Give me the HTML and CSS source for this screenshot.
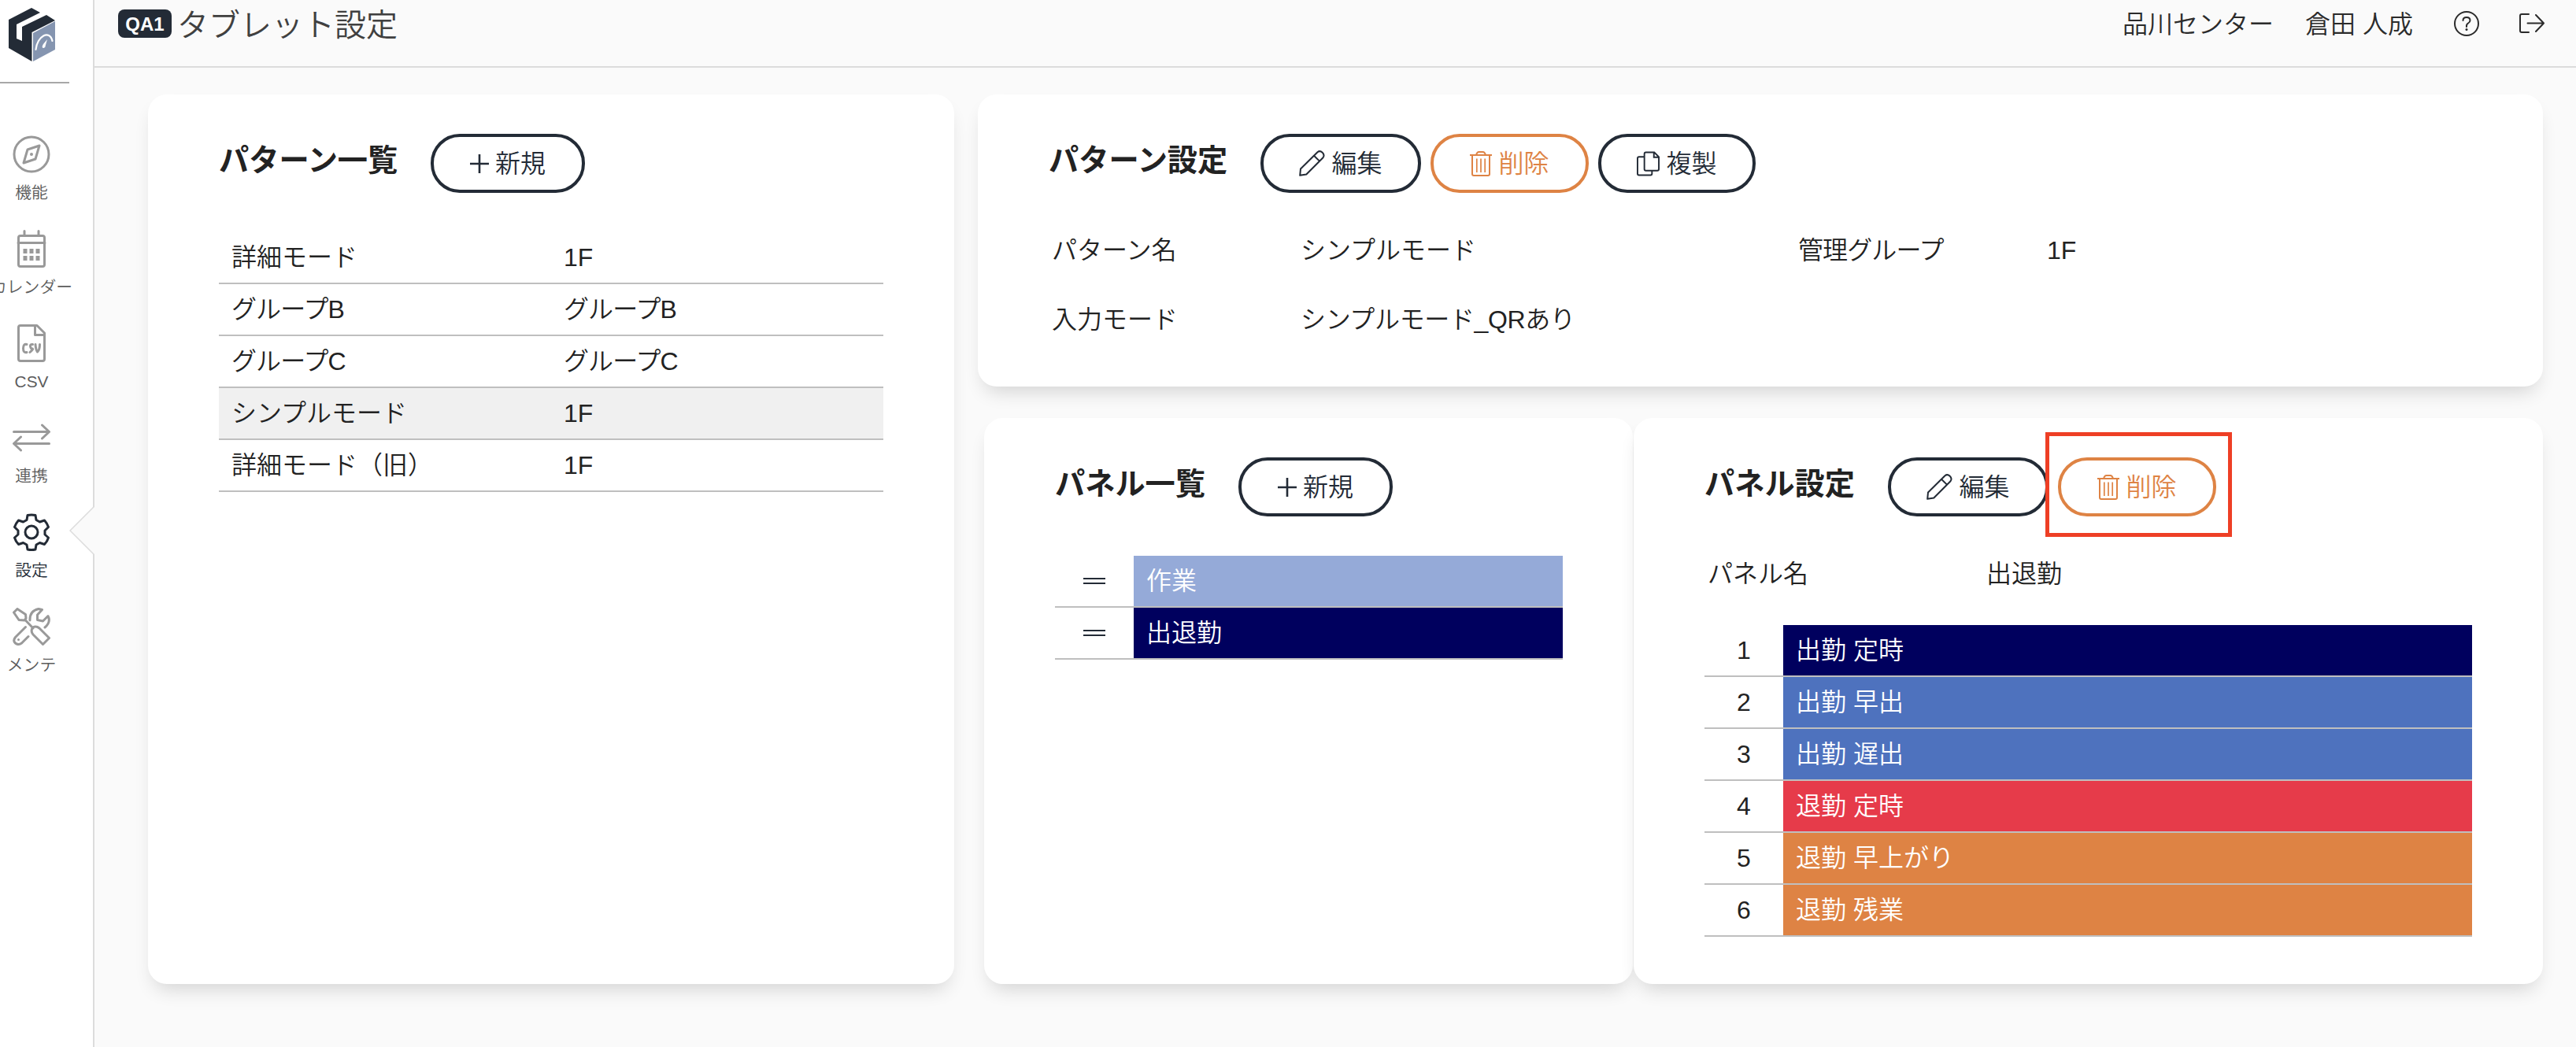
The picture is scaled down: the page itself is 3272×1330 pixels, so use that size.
FILE: index.html
```html
<!DOCTYPE html>
<html lang="ja">
<head>
<meta charset="utf-8">
<title>タブレット設定</title>
<link rel="stylesheet" href="styles.css">
</head>
<body>
<svg class="defs" aria-hidden="true">
  <symbol id="plus" viewBox="0 0 24 24"><path d="M12 0v24M0 12h24" stroke="currentColor" stroke-width="2.6" fill="none"/></symbol>
  <symbol id="pencil" viewBox="0 0 33 33"><path fill="none" stroke="currentColor" stroke-width="2" stroke-linejoin="round" d="M1.200 31.800 2 23.500 23.500 2.300Q26.500-.200 29.700 2.800T30.500 9.300L9.300 30.500zM19 6.800 26 13.600"/></symbol>
  <symbol id="trash" viewBox="0 0 28 32"><g fill="none" stroke="currentColor" stroke-width="2"><path d="M0 5h28M8 5Q9 1 11.500 1h5Q19 1 20 5M3 5V29q0 2 2 2h18q2 0 2-2V5"/><path d="M8.800 9.500V27M14 9.500V27M19.200 9.500V27" stroke-width="1.700"/></g></symbol>
  <symbol id="copy" viewBox="0 0 30 32"><g fill="none" stroke="currentColor" stroke-width="2"><path d="M12 1h11l6 6v16q0 2-2 2H12q-2 0-2-2V3q0-2 2-2zM22.500 1v6.500h6.500M10 7H3Q1 7 1 9v20q0 2 2 2h15q2 0 2-2v-4"/></g></symbol>
</svg>
<div class="app">
  <nav class="side">
    <svg class="logo" viewBox="0 0 60 68"><path fill="#232b36" d="M0 15 29 0 40 6 10 21V39L17 42V24L48 9 59 16 29.500 31V68L0 51z"/><path fill="#8595b0" d="M31 32 59 17V53L31 68z"/><path d="M34.500 53C36 36 52 27 55.500 42" fill="none" stroke="#fff" stroke-width="2.200" stroke-linecap="round"/><path fill="#fff" d="M49 40 44 46Q41 51 44.500 51 47 50 47 47z"/></svg>
    <hr class="rule">
    <a class="item"><svg viewBox="0 0 48 48"><circle cx="24" cy="24" r="22"/><path d="M34 13 29 30 14 35 19 18z"/><circle class="dot" cx="24" cy="24" r="2"/></svg><span>機能</span></a>
    <a class="item"><svg viewBox="0 0 48 48"><rect x="7.500" y="7.500" width="33" height="39" rx="2.500"/><path d="M7 16.500h34M15 1.500v6M33 1.500v6"/><path class="dot" d="M13.500 24h5v6h-5zM21.500 24h5v6h-5zM29.500 24h5v6h-5zM13.500 33h5v6h-5zM21.500 33h5v6h-5zM29.500 33h5v6h-5z"/></svg><span>カレンダー</span></a>
    <a class="item"><svg viewBox="0 0 48 48"><path d="M10 1.500H31L40.500 11V44q0 2.500-2.500 2.500H10q-2.500 0-2.500-2.500V4Q7.500 1.500 10 1.500zM28.500 2V13.500H40"/><path d="M18 25.500q-4.500-1-4.500 5t4.500 5M25.500 25.500q-3.500-.500-3 2.500t2.500 3-3 4.500M29 25.500q.500 7 2.500 9.500 3-2.500 3-9.500"/></svg><span>CSV</span></a>
    <a class="item"><svg viewBox="0 0 48 48"><path d="M1.500 16.500h44M37.500 8l9 8.500-9 8.500M46.500 31.500H2M10.500 23l-9 8.500 9 8.500"/></svg><span>連携</span></a>
    <a class="item on"><svg viewBox="0 0 48 48"><circle cx="24" cy="24" r="8"/><path d="M19 2.500Q24 1.500 29 2.500L30 8.500 34.500 11 40.500 9Q44 13 45.500 17.500L41 22V27L45.500 31Q44 36 40.500 39.500L34.500 37.500 30 40 29 46Q24 47 19 46L18 40 13.500 37.500 7.500 39.500Q4 36 2.500 31L7 27V22L2.500 17.500Q4 13 7.500 9L13.500 11 18 8.500z"/></svg><span>設定</span></a>
    <a class="item"><svg viewBox="0 0 48 48"><path d="M6 1.500 1.500 6 8 15.500 15 16 17 13.500 16.500 8.500zM16 15.500 26 26M25.500 25Q30 22.500 34 26L46.500 38.500 38.500 46.500 26 34Q22.500 30 25.500 25zM16.500 24.500 3.500 37.500Q0 42 3.500 45T11.500 45L20 36.500M22 16Q21.500 4 33 1.500L37.500 2.500 31.500 9 31.500 15.500 38.500 17 45 10.500Q49 18 41 25"/><circle class="dot" cx="7.500" cy="40.500" r="1.500"/></svg><span>メンテ</span></a>
    <svg class="notch" viewBox="0 0 32 62"><path d="M32 0 1 31 32 62" fill="#fafafa" stroke="#dcdcdc" stroke-width="1.500"/></svg>
  </nav>
  <div class="body">
    <header class="top">
      <b class="badge">QA1</b><h1>タブレット設定</h1>
      <span class="center">品川センター</span><span class="user">倉田 人成</span>
      <svg class="help" viewBox="0 0 32 32"><circle cx="16" cy="16" r="15"/><path d="M11.500 12Q11.500 8 16 8T20.500 12Q20.500 14 18 15.500T16 20"/><circle class="dot" cx="16" cy="23.500" r="1.500"/></svg>
      <svg class="exit" viewBox="0 0 32 26"><path d="M12 1H3Q1 1 1 3V22Q1 24 3 24H12M10.500 12.500H31M21 2 31 12.500 21 23"/></svg>
    </header>
    <main class="main">
      <section class="card patterns">
        <div class="head"><h2>パターン一覧</h2><button class="btn new"><svg><use href="#plus"/></svg>新規</button></div>
        <div class="table">
          <div class="row"><span>詳細モード</span><span>1F</span></div>
          <div class="row"><span class="tight">グループB</span><span class="tight">グループB</span></div>
          <div class="row"><span class="tight">グループC</span><span class="tight">グループC</span></div>
          <div class="row sel"><span>シンプルモード</span><span>1F</span></div>
          <div class="row"><span>詳細モード（旧）</span><span>1F</span></div>
        </div>
      </section>
      <div class="right">
        <section class="card detail">
          <div class="head"><h2>パターン設定</h2><button class="btn edit"><svg><use href="#pencil"/></svg>編集</button><button class="btn del"><svg><use href="#trash"/></svg>削除</button><button class="btn dup"><svg><use href="#copy"/></svg>複製</button></div>
          <div class="fields"><span>パターン名</span><span>シンプルモード</span><span class="tight">管理グループ</span><span>1F</span><span>入力モード</span><span class="snug">シンプルモード_QRあり</span></div>
        </section>
        <div class="lower">
          <section class="card panels">
            <div class="head"><h2>パネル一覧</h2><button class="btn new"><svg><use href="#plus"/></svg>新規</button></div>
            <div class="table">
              <div class="prow"><i class="grip"></i><span class="pale">作業</span></div>
              <div class="prow"><i class="grip"></i><span class="navy">出退勤</span></div>
            </div>
          </section>
          <section class="card panel">
            <div class="head"><h2>パネル設定</h2><button class="btn edit"><svg><use href="#pencil"/></svg>編集</button><button class="btn del"><svg><use href="#trash"/></svg>削除<em class="mark"></em></button></div>
            <div class="name"><span>パネル名</span><span>出退勤</span></div>
            <div class="table">
              <div class="prow"><b>1</b><span class="navy">出勤 定時</span></div>
              <div class="prow"><b>2</b><span class="blue">出勤 早出</span></div>
              <div class="prow"><b>3</b><span class="blue">出勤 遅出</span></div>
              <div class="prow"><b>4</b><span class="red">退勤 定時</span></div>
              <div class="prow"><b>5</b><span class="orange">退勤 早上がり</span></div>
              <div class="prow"><b>6</b><span class="orange">退勤 残業</span></div>
            </div>
          </section>
        </div>
      </div>
    </main>
  </div>
</div>
</body>
</html>
```
FILE: styles.css
```css
* { box-sizing: border-box; margin: 0; padding: 0; }
body { font: 350 32px/1 "Liberation Sans", "Noto Sans CJK JP", sans-serif; color: #222; background: #fafafa; overflow: hidden; }
.defs { display: none; }
.app { display: flex; width: 3272px; height: 1330px; }
.side { position: relative; width: 120px; flex: none; background: #fff; border-right: 2px solid #dcdcdc; }
.logo { display: block; width: 60px; height: 68px; margin: 10px 0 0 11px; }
.rule { width: 88px; height: 2px; border: 0; background: #a8a8a8; margin: 26px 0 66px; }
.item { display: flex; flex-direction: column; align-items: center; width: 80px; height: 120px; font-size: 20.8px; color: #5c5c5c; white-space: nowrap; }
.item svg { width: 48px; height: 48px; flex: none; fill: none; stroke: #999; stroke-width: 3; stroke-linejoin: round; stroke-linecap: round; }
.item .dot { fill: #999; stroke: none; }
.item span { margin-top: 15px; }
.item.on { color: #232b36; }
.item.on svg { stroke: #232b36; }
.notch { position: absolute; left: 88px; top: 643px; width: 32px; height: 62px; }
.body { flex: 1; }
.top { display: flex; align-items: center; height: 86px; padding: 0 40px 24px 30px; border-bottom: 2px solid #dcdcdc; color: #2b2b2b; }
.badge { width: 68px; height: 36px; border-radius: 8px; background: #232b36; color: #fff; font: bold 24px/37px "Liberation Sans", sans-serif; text-align: center; }
h1 { font-size: 40px; font-weight: 350; margin: 3px 0 0 7px; color: #404040; }
.center { margin: 2px 0 0 auto; }
.user { margin: 2px 0 0 40px; }
.help { width: 32px; height: 32px; margin-left: 52px; }
.exit { width: 32px; height: 26px; margin-left: 51px; }
.top svg { fill: none; stroke: #2b2b2b; stroke-width: 2; stroke-linecap: round; stroke-linejoin: round; }
.top svg .dot { fill: #2b2b2b; stroke: none; }
.main { display: flex; gap: 30px; padding: 34px 42px 0 68px; }
.card { background: #fff; border-radius: 24px; box-shadow: 0 14px 24px -8px rgba(0,0,0,.16); }
.patterns { width: 1024px; height: 1130px; padding: 50px 90px; }
.right { flex: 1; }
.detail { height: 371px; padding: 50px 0 0 90px; }
.lower { display: flex; gap: 1px; margin: 40px 0 0 8px; height: 719px; }
.panels { width: 824px; padding: 50px 89px 0 90px; }
.panel { flex: 1; padding: 50px 90px 0 90px; }
.head { display: flex; height: 75px; gap: 12px; }
h2 { font-size: 38.2px; font-weight: 700; line-height: 68px; white-space: nowrap; }
.patterns h2, .detail h2 { width: 257px; }
.panels h2, .panel h2 { width: 221px; }
.btn { position: relative; display: flex; align-items: center; justify-content: center; gap: 8px; height: 75px; border: 4px solid #232b36; border-radius: 37px; background: #fff; color: #232b36; font: inherit; white-space: nowrap; }
.btn svg { flex: none; }
.new { width: 196px; }
.new svg { width: 24px; height: 24px; }
.edit { width: 204px; }
.edit svg { width: 33px; height: 33px; }
.del { width: 201px; border-color: #de8344; color: #de8344; }
.del svg { width: 28px; height: 32px; }
.dup { width: 200px; }
.dup svg { width: 29px; height: 32px; }
.mark { position: absolute; left: -20px; top: -36px; width: 237px; height: 133px; border: 5px solid #ee3f25; }
.tight { letter-spacing: -.9px; }
.snug { letter-spacing: -.35px; }
.table { margin-top: 50px; }
.row { display: flex; height: 66px; border-bottom: 2px solid #bfbfbf; }
.row span { width: 50%; padding-left: 16px; line-height: 64px; }
.sel { background: #f0f0f0; }
.fields { display: grid; grid-template-columns: 316px 632px 316px 1fr; grid-auto-rows: 88px; padding: 29px 0 0 4px; line-height: 88px; }
.prow { display: flex; height: 66px; border-bottom: 2px solid #bfbfbf; }
.prow span { flex: 1; padding-left: 16px; line-height: 64px; color: #fff; }
.prow b { width: 100px; text-align: center; line-height: 64px; font-weight: 400; }
.grip { width: 28px; height: 8px; margin: 28px 36px; border: solid #232b36; border-width: 2px 0; }
.name { display: flex; margin-top: 29px; line-height: 88px; padding-left: 4px; }
.name span { width: 354px; }
.panel .table { margin-top: 21px; }
.pale { background: #95aad8; }
.navy { background: #00005e; }
.blue { background: #4e72be; }
.red { background: #e63b4a; }
.orange { background: #de8344; }
```
